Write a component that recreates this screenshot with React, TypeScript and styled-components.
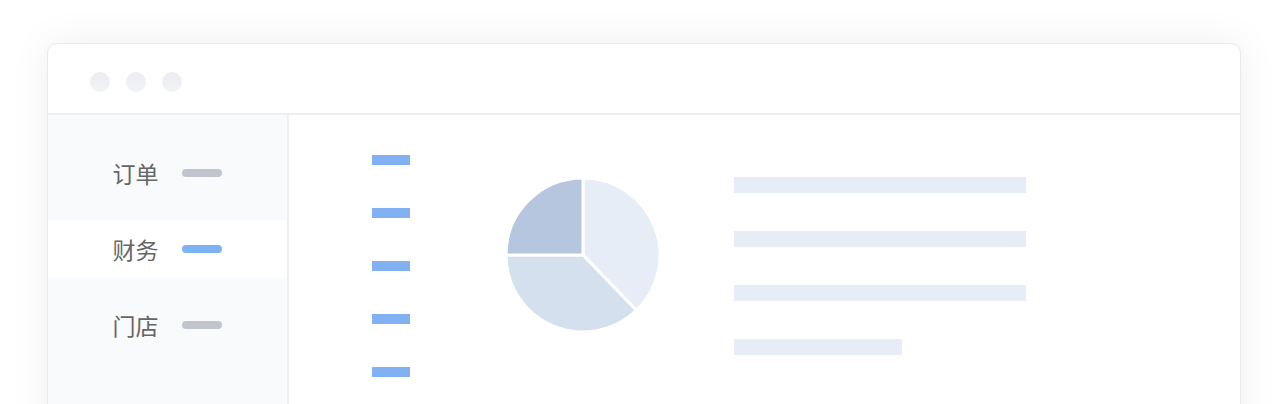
import React from "react";
import styled, { createGlobalStyle } from "styled-components";

const Global = createGlobalStyle`
  html, body { margin: 0; padding: 0; background: #ffffff; }
  body { font-family: "Noto Sans CJK SC", "Noto Sans", sans-serif; overflow: hidden; }
`;

const Page = styled.div`
  padding: 43px 0 0 47px;
  width: 1288px;
  height: 404px;
  box-sizing: border-box;
`;

const Window = styled.div`
  width: 1194px;
  height: 420px;
  box-sizing: border-box;
  border: 1px solid #e9e9e9;
  border-radius: 10px;
  background: #fff;
  box-shadow: 0 0 40px rgba(0, 0, 0, 0.07);
  overflow: hidden;
  display: flex;
  flex-direction: column;
`;

const TitleBar = styled.div`
  height: 71px;
  box-sizing: border-box;
  padding: 28px 0 0 42px;
  display: flex;
  align-items: flex-start;
  gap: 16px;
  border-bottom: 2px solid #eeeeee;
`;

const Dot = styled.span`
  width: 20px;
  height: 20px;
  border-radius: 50%;
  background: linear-gradient(#ebedf1, #f2f3f6);
`;

const Body = styled.div`
  flex: 1;
  display: flex;
`;

const Sidebar = styled.div`
  width: 241px;
  box-sizing: border-box;
  background: #f9fafc;
  border-right: 2px solid #eeeeee;
  padding-top: 29px;
  display: flex;
  flex-direction: column;
  gap: 18px;
`;

const NavRow = styled.div<{ $active?: boolean }>`
  height: 58px;
  display: flex;
  align-items: center;
  justify-content: center;
  gap: 23px;
  padding-right: 1px;
  background: ${(p) => (p.$active ? "#ffffff" : "transparent")};
`;

const NavLabel = styled.span`
  font-size: 23px;
  line-height: 1;
  color: #666666;
  font-weight: 400;
`;

const Pill = styled.span<{ $active?: boolean }>`
  width: 40px;
  height: 8px;
  border-radius: 4px;
  background: ${(p) => (p.$active ? "#7db3f5" : "#c0c4cc")};
`;

const Main = styled.div`
  flex: 1;
  display: flex;
  align-items: flex-start;
  padding-left: 83px;
`;

const BarColumn = styled.div`
  padding-top: 40px;
  display: flex;
  flex-direction: column;
  gap: 43px;
`;

const BlueBar = styled.span`
  width: 38px;
  height: 10px;
  background: #82b1f3;
`;

const PieWrap = styled.div`
  margin: 61px 0 0 94px;
  width: 158px;
  height: 158px;
`;

const LineColumn = styled.div`
  margin: 62px 0 0 72px;
  display: flex;
  flex-direction: column;
  gap: 38px;
`;

const TextLine = styled.span<{ $w: number }>`
  width: ${(p) => p.$w}px;
  height: 16px;
  background: #e6edf6;
`;

function pt(cx: number, cy: number, r: number, a: number) {
  const rad = (a * Math.PI) / 180;
  return [cx + r * Math.sin(rad), cy - r * Math.cos(rad)];
}

function slice(cx: number, cy: number, r: number, a0: number, a1: number) {
  const [x0, y0] = pt(cx, cy, r, a0);
  const [x1, y1] = pt(cx, cy, r, a1);
  const large = a1 - a0 > 180 ? 1 : 0;
  return `M${cx} ${cy} L${x0} ${y0} A${r} ${r} 0 ${large} 1 ${x1} ${y1} Z`;
}

const Pie = () => {
  const c = 79;
  const r = 77;
  return (
    <svg width="158" height="158" viewBox="0 0 158 158">
      <path d={slice(c, c, r, 0, 136)} fill="#e6edf6" stroke="#fff" strokeWidth="3" />
      <path d={slice(c, c, r, 136, 270)} fill="#d5e0ef" stroke="#fff" strokeWidth="3" />
      <path d={slice(c, c, r, 270, 360)} fill="#b6c6de" stroke="#fff" strokeWidth="3" />
    </svg>
  );
};

const nav = [
  { label: "订单", active: false },
  { label: "财务", active: true },
  { label: "门店", active: false },
];

export default function App() {
  return (
    <>
      <Global />
      <Page>
        <Window>
          <TitleBar>
            <Dot />
            <Dot />
            <Dot />
          </TitleBar>
          <Body>
            <Sidebar>
              {nav.map((n) => (
                <NavRow key={n.label} $active={n.active}>
                  <NavLabel>{n.label}</NavLabel>
                  <Pill $active={n.active} />
                </NavRow>
              ))}
            </Sidebar>
            <Main>
              <BarColumn>
                {[0, 1, 2, 3, 4].map((i) => (
                  <BlueBar key={i} />
                ))}
              </BarColumn>
              <PieWrap>
                <Pie />
              </PieWrap>
              <LineColumn>
                {[292, 292, 292, 168].map((w, i) => (
                  <TextLine key={i} $w={w} />
                ))}
              </LineColumn>
            </Main>
          </Body>
        </Window>
      </Page>
    </>
  );
}
